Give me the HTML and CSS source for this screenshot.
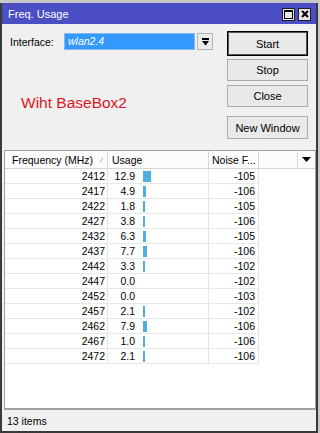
FILE: index.html
```html
<!DOCTYPE html>
<html>
<head>
<meta charset="utf-8">
<link rel="stylesheet" href="styles.css">
</head>
<body>
<div class="window">
  <div class="titlebar">
    <span class="title">Freq. Usage</span>
    <div class="tbtns">
      <span class="tbtn"><svg width="9" height="9" viewBox="0 0 9 9"><rect x="0.5" y="0.5" width="8" height="8" fill="none" stroke="#000" stroke-width="1"/><rect x="0" y="0" width="9" height="2" fill="#000"/></svg></span>
      <span class="tbtn"><svg width="8" height="8" viewBox="0 0 8 8"><path d="M1 1L7 7M7 1L1 7" stroke="#000" stroke-width="2"/></svg></span>
    </div>
  </div>
  <div class="content">
    <div class="top">
      <div class="left">
        <div class="iface-row">
          <span class="label">Interface:</span>
          <div class="select"><span>wlan2.4</span></div>
          <div class="dd"><svg width="7" height="8" viewBox="0 0 7 8"><rect x="0" y="0" width="7" height="2" fill="#000"/><path d="M0 3H7L3.5 7.5Z" fill="#000"/></svg></div>
        </div>
        <div class="note">Wiht BaseBox2</div>
      </div>
      <div class="buttons">
        <div class="btn start">Start</div>
        <div class="btn stop">Stop</div>
        <div class="btn close">Close</div>
        <div class="btn newwin">New Window</div>
      </div>
    </div>
    <div class="list">
      <div class="thead">
        <div class="th c1">Frequency (MHz)<svg class="sort" width="5" height="6" viewBox="0 0 5 6"><path d="M1 5.5L4 0.5" stroke="#b8b8b8" stroke-width="1"/></svg></div>
        <div class="th c2">Usage</div>
        <div class="th c3">Noise F...</div>
        <div class="th c4"></div>
        <div class="th c5"><svg width="9" height="5" viewBox="0 0 9 5"><path d="M0 0H9L4.5 5Z" fill="#000"/></svg></div>
      </div>
      <div class="tbody">
        <div class="row"><div class="td f">2412</div><div class="td u"><span class="v">12.9</span><span class="bar" style="width:8px"></span></div><div class="td n">-105</div></div>
        <div class="row"><div class="td f">2417</div><div class="td u"><span class="v">4.9</span><span class="bar" style="width:3px"></span></div><div class="td n">-106</div></div>
        <div class="row"><div class="td f">2422</div><div class="td u"><span class="v">1.8</span><span class="bar" style="width:2px"></span></div><div class="td n">-105</div></div>
        <div class="row"><div class="td f">2427</div><div class="td u"><span class="v">3.8</span><span class="bar" style="width:2px"></span></div><div class="td n">-106</div></div>
        <div class="row"><div class="td f">2432</div><div class="td u"><span class="v">6.3</span><span class="bar" style="width:3px"></span></div><div class="td n">-105</div></div>
        <div class="row"><div class="td f">2437</div><div class="td u"><span class="v">7.7</span><span class="bar" style="width:4px"></span></div><div class="td n">-106</div></div>
        <div class="row"><div class="td f">2442</div><div class="td u"><span class="v">3.3</span><span class="bar" style="width:2px"></span></div><div class="td n">-102</div></div>
        <div class="row"><div class="td f">2447</div><div class="td u"><span class="v">0.0</span></div><div class="td n">-102</div></div>
        <div class="row"><div class="td f">2452</div><div class="td u"><span class="v">0.0</span></div><div class="td n">-103</div></div>
        <div class="row"><div class="td f">2457</div><div class="td u"><span class="v">2.1</span><span class="bar" style="width:2px"></span></div><div class="td n">-102</div></div>
        <div class="row"><div class="td f">2462</div><div class="td u"><span class="v">7.9</span><span class="bar" style="width:4px"></span></div><div class="td n">-106</div></div>
        <div class="row"><div class="td f">2467</div><div class="td u"><span class="v">1.0</span><span class="bar" style="width:2px"></span></div><div class="td n">-106</div></div>
        <div class="row"><div class="td f">2472</div><div class="td u"><span class="v">2.1</span><span class="bar" style="width:2px"></span></div><div class="td n">-106</div></div>
      </div>
    </div>
    <div class="status">13 items</div>
  </div>
</div>
</body>
</html>
```
FILE: styles.css
```css
* { box-sizing: border-box; }
html, body { margin: 0; padding: 0; }
body {
  width: 320px;
  height: 433px;
  overflow: hidden;
  background: #c8c8c8;
  font-family: "Liberation Sans", Arial, sans-serif;
  font-size: 10.5px;
  color: #000;
}
.window {
  margin-top: 3px;
  width: 318px;
  height: 430px;
  border-left: 2px solid #3a3a3a;
  border-right: 2px solid #3a3a3a;
  border-bottom: 2px solid #3a3a3a;
  background: #f0f0f0;
  display: flex;
  flex-direction: column;
}
.titlebar {
  height: 21px;
  flex: none;
  background: #4b4fc3;
  display: flex;
  align-items: center;
  justify-content: space-between;
  padding: 0 5px 0 6px;
}
.title { color: #fff; font-size: 11px; }
.tbtns { display: flex; gap: 3px; margin-top: 1px; }
.tbtn {
  width: 13px;
  height: 13px;
  background: #e6e6e6;
  border: 1px solid #1e1e1e;
  display: flex;
  align-items: center;
  justify-content: center;
}
.content { flex: 1; display: flex; flex-direction: column; }
.top {
  height: 126px;
  flex: none;
  display: flex;
  justify-content: space-between;
}
.left { padding: 9px 0 0 8px; }
.iface-row { display: flex; align-items: center; height: 17px; }
.label { width: 54px; }
.select {
  width: 131px;
  height: 17px;
  background: #3399ff;
  border: 1px solid #84b9ee;
  color: #fff;
  font-style: italic;
  padding-left: 3px;
  line-height: 15px;
  margin-right: 2px;
}
.dd {
  width: 16px;
  height: 17px;
  background: #ececec;
  border: 1px solid #b4b4b4;
  display: flex;
  align-items: center;
  justify-content: center;
}
.note {
  margin-top: 44px;
  padding-left: 11px;
  font-size: 15.5px;
  line-height: 18px;
  color: #e0141e;
}
.buttons {
  width: 81px;
  margin-right: 8px;
  padding-top: 7px;
  display: flex;
  flex-direction: column;
  font-size: 11px;
}
.btn {
  background: #e9e9e9;
  border: 1px solid #acacac;
  display: flex;
  align-items: center;
  justify-content: center;
  height: 22px;
}
.btn.start { height: 25px; border-color: #000; box-shadow: inset 0 0 0 1px #555; }
.btn.stop { margin-top: 3px; }
.btn.close { margin-top: 4px; }
.btn.newwin { margin-top: 9px; height: 23px; }
.list {
  margin-left: 2px;
  height: 260px;
  flex: none;
  background: #fff;
  border: 1px solid #a0a0a0;
  border-bottom: 2px solid #a0a0a0;
}
.thead {
  display: grid;
  grid-template-columns: 103px 101px 50px 39px 1fr;
  height: 18px;
  background: #fcfcfc;
  border-bottom: 1px solid #d6d6d6;
}
.th {
  border-right: 1px solid #d6d6d6;
  display: flex;
  align-items: center;
  white-space: nowrap;
}
.th.c1 { padding-left: 7px; }
.th.c2 { padding-left: 4px; }
.th.c3 { padding-left: 3px; }
.th.c5 { justify-content: center; border-right: none; }
.sort { margin-left: 6px; }
.row {
  display: grid;
  grid-template-columns: 103px 101px 50px;
  height: 15px;
}
.td {
  border-right: 1px solid #e4e4e4;
  border-bottom: 1px solid #e8e8e8;
  display: flex;
  align-items: center;
  white-space: nowrap;
}
.td.f { justify-content: flex-end; padding-right: 2px; }
.td.n { justify-content: flex-end; padding-right: 3px; }
.v { width: 27px; text-align: right; }
.bar { height: 11px; margin-left: 8px; background: #4cafe0; }
.status {
  flex: 1;
  padding-left: 5px;
  display: flex;
  align-items: center;
}
```
